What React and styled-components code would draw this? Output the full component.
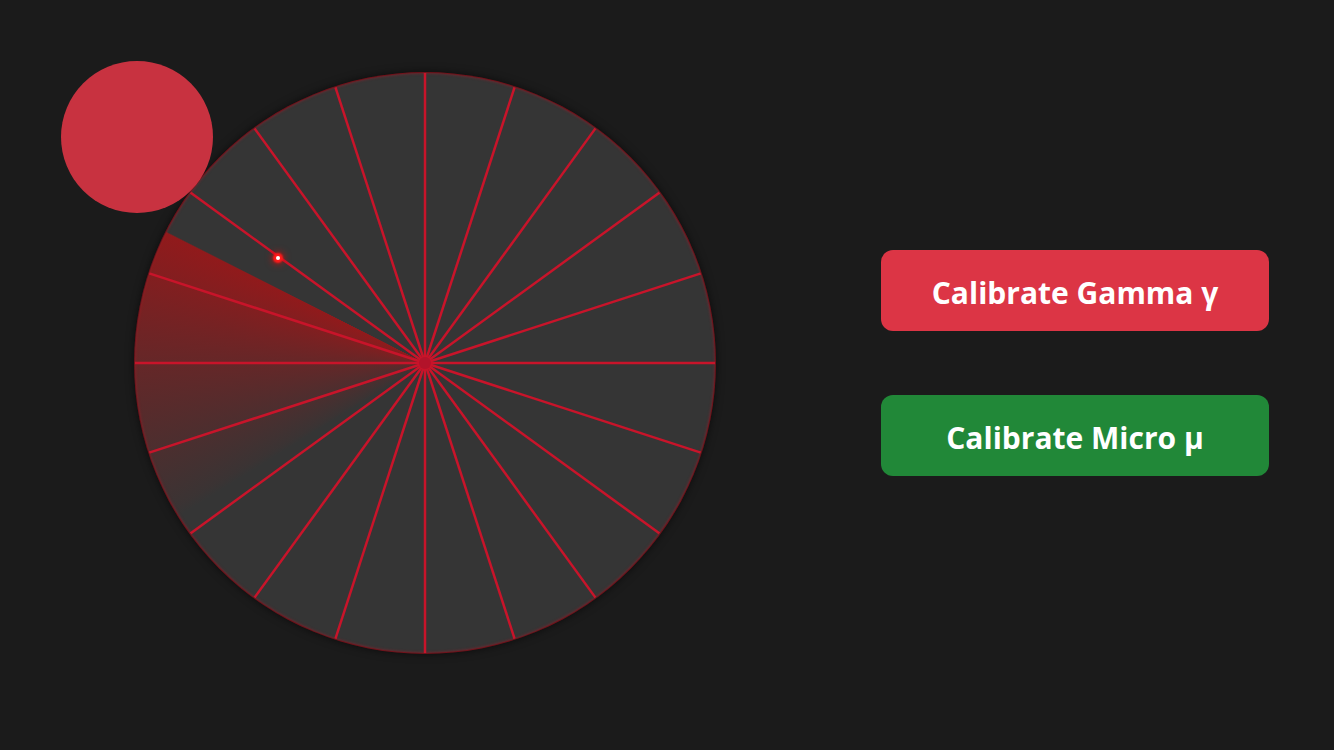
import React from 'react'
import styled, { createGlobalStyle } from 'styled-components'

const GlobalStyle = createGlobalStyle`
  html, body {
    margin: 0;
    padding: 0;
    background: #1b1b1b;
    font-family: "Open Sans", "Liberation Sans", sans-serif;
  }
`;

const SPOKES = Array.from({ length: 20 }, (_, i) => i * 18);

function Radar() {
  return (
    <Scope>
      <Sweep />
      <Spokes viewBox="0 0 580 580">
        {SPOKES.map((deg) => {
          const a = (deg * Math.PI) / 180;
          return (
            <line
              key={deg}
              x1="290"
              y1="290"
              x2={290 + 290 * Math.cos(a)}
              y2={290 + 290 * Math.sin(a)}
              stroke="#c8142a"
              strokeWidth="2.5"
            />
          );
        })}
        <circle cx="290" cy="290" r="6" fill="#b3132a" />
      </Spokes>
      <Blip style={{ left: 143, top: 185 }} />
    </Scope>
  );
}

function App() {
  return (
    <>
      <GlobalStyle />
      <Page>
        <Target />
        <Row>
          <Radar />
          <Controls>
            <ActionButton $tone="#dc3545">Calibrate Gamma γ</ActionButton>
            <ActionButton $tone="#218838">Calibrate Micro μ</ActionButton>
          </Controls>
        </Row>
      </Page>
    </>
  );
}

const Page = styled.div`
  position: relative;
  min-height: 100vh;
  padding: 73px 0 0 135px;
  box-sizing: border-box;
`;

const Row = styled.div`
  display: flex;
  align-items: center;
  gap: 166px;
`;

const Scope = styled.div`
  position: relative;
  width: 580px;
  height: 580px;
  flex-shrink: 0;
  border-radius: 50%;
  background: #353535;
  overflow: hidden;
  box-shadow: 0 0 0 1px rgba(190, 20, 35, 0.55), 0 0 10px rgba(0, 0, 0, 0.7),
    inset 0 0 3px rgba(200, 20, 40, 0.6);
`;

const Sweep = styled.div`
  position: absolute;
  inset: 0;
  background: conic-gradient(
    from 0deg,
    transparent 0deg 238deg,
    rgba(160, 22, 24, 0.05) 240deg,
    rgba(160, 22, 24, 0.45) 270deg,
    rgba(165, 20, 22, 0.82) 296.7deg,
    transparent 297deg
  );
`;

const Spokes = styled.svg`
  position: absolute;
  inset: 0;
  width: 100%;
  height: 100%;
`;

const Blip = styled.span`
  position: absolute;
  width: 4px;
  height: 4px;
  margin: -2px 0 0 -2px;
  border-radius: 50%;
  background: #fff;
  box-shadow: 0 0 2px 3px #ff1a1a, 0 0 7px 4px rgba(255, 0, 0, 0.55);
`;

const Target = styled.div`
  position: absolute;
  left: 61px;
  top: 61px;
  width: 152px;
  height: 152px;
  border-radius: 50%;
  background: rgba(220, 53, 69, 0.9);
  z-index: 2;
`;

const Controls = styled.div`
  display: flex;
  flex-direction: column;
  gap: 64px;
`;

const ActionButton = styled.button`
  width: 388px;
  height: 81px;
  padding: 4px 0 0;
  border: none;
  border-radius: 12px;
  background: ${(p) => p.$tone};
  color: #fff;
  font-family: "Open Sans", "Liberation Sans", sans-serif;
  font-weight: 700;
  font-size: 30px;
  cursor: pointer;
`;

export default App;
